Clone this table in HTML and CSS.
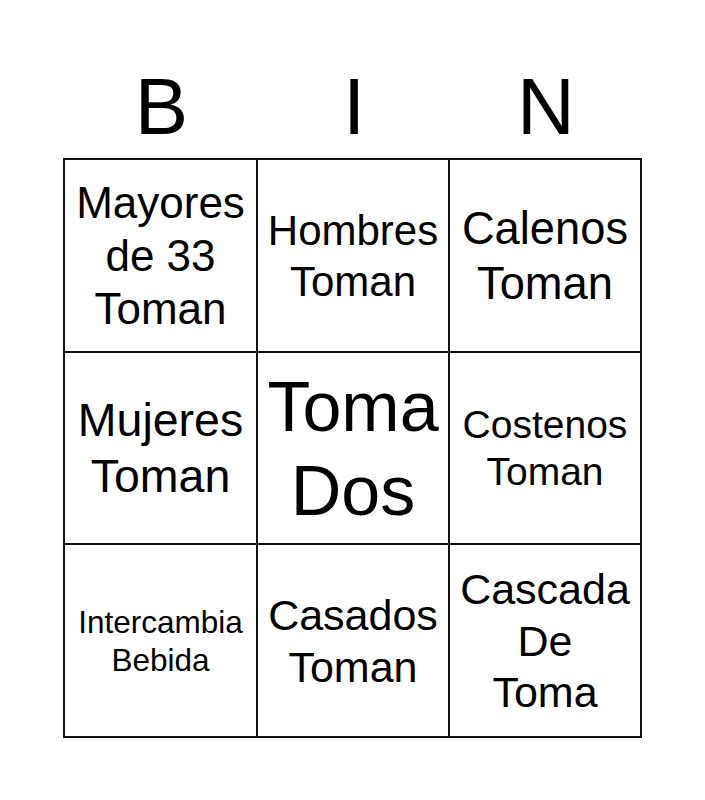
FILE: index.html
```html
<!DOCTYPE html>
<html>
<head>
<meta charset="utf-8">
<link rel="stylesheet" href="styles.css">
</head>
<body>
<div class="card">
  <div class="head">
    <div class="letter">B</div>
    <div class="letter">I</div>
    <div class="letter">N</div>
  </div>
  <div class="grid">
    <div class="cell s44">Mayores de 33 Toman</div>
    <div class="cell s42">Hombres Toman</div>
    <div class="cell s45">Calenos Toman</div>
    <div class="cell s46">Mujeres Toman</div>
    <div class="cell s70">Toma Dos</div>
    <div class="cell s39">Costenos Toman</div>
    <div class="cell s31">Intercambia Bebida</div>
    <div class="cell s43">Casados Toman</div>
    <div class="cell s43">Cascada De Toma</div>
  </div>
</div>
</body>
</html>
```

FILE: styles.css
```css
html, body {
  margin: 0;
  padding: 0;
  background: #fff;
}
body {
  font-family: "Liberation Sans", Arial, sans-serif;
  color: #000;
}
.card {
  width: 579px;
  margin: 0 auto;
  padding-top: 61px;
}
.head {
  display: grid;
  grid-template-columns: 193px 192px 192px;
  padding-left: 2px;
  height: 92px;
  margin-bottom: 5px;
}
.letter {
  font-size: 80px;
  line-height: 92px;
  text-align: center;
}
.grid {
  display: grid;
  grid-template-columns: 193px 192px 192px;
  grid-template-rows: 193px 192px 193px;
  border-left: 2px solid #111;
  border-top: 2px solid #111;
}
.cell {
  border-right: 2px solid #111;
  border-bottom: 2px solid #111;
  display: flex;
  align-items: center;
  justify-content: center;
  text-align: center;
  padding: 2px 11px 0;
  line-height: 1.2;
}
.s31 { font-size: 31.5px; }
.s39 { font-size: 39px; }
.s42 { font-size: 42px; }
.s43 { font-size: 43px; }
.s44 { font-size: 44px; }
.s45 { font-size: 45.3px; }
.s46 { font-size: 46.5px; }
.s70 { font-size: 70px; }
```
